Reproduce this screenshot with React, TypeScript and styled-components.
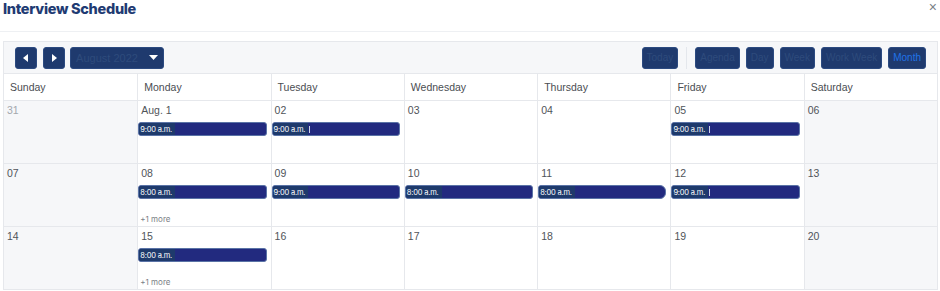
import React from 'react';
import styled, { createGlobalStyle } from 'styled-components';

const GlobalStyle = createGlobalStyle`
  body {
    margin: 0;
    background: #ffffff;
    font-family: "Liberation Sans", Arial, sans-serif;
  }
`;

type Event = { time: string; mark?: boolean; rounded?: boolean };
type Day = { label: string; muted?: boolean; weekend?: boolean; events?: Event[]; more?: number };

const weekdays = ['Sunday', 'Monday', 'Tuesday', 'Wednesday', 'Thursday', 'Friday', 'Saturday'];

const weeks: Day[][] = [
  [
    { label: '31', muted: true, weekend: true },
    { label: 'Aug. 1', events: [{ time: '9:00 a.m.' }] },
    { label: '02', events: [{ time: '9:00 a.m.', mark: true }] },
    { label: '03' },
    { label: '04' },
    { label: '05', events: [{ time: '9:00 a.m.', mark: true }] },
    { label: '06', weekend: true },
  ],
  [
    { label: '07', weekend: true },
    { label: '08', events: [{ time: '8:00 a.m.' }], more: 1 },
    { label: '09', events: [{ time: '9:00 a.m.' }] },
    { label: '10', events: [{ time: '8:00 a.m.' }] },
    { label: '11', events: [{ time: '8:00 a.m.', rounded: true }] },
    { label: '12', events: [{ time: '9:00 a.m.', mark: true }] },
    { label: '13', weekend: true },
  ],
  [
    { label: '14', weekend: true },
    { label: '15', events: [{ time: '8:00 a.m.' }], more: 1 },
    { label: '16' },
    { label: '17' },
    { label: '18' },
    { label: '19' },
    { label: '20', weekend: true },
  ],
];

const views = ['Agenda', 'Day', 'Week', 'Work Week', 'Month'];

const App: React.FC = () => {
  return (
    <Page>
      <GlobalStyle />
      <Header>
        <Title>Interview Schedule</Title>
        <Close>×</Close>
      </Header>

      <Calendar>
        <Toolbar>
          <Group>
            <NavButton aria-label="previous">
              <svg width="6" height="8" viewBox="0 0 6 8">
                <path d="M5 0 L0 4 L5 8 Z" fill="#ffffff" />
              </svg>
            </NavButton>
            <NavButton aria-label="next">
              <svg width="6" height="8" viewBox="0 0 6 8">
                <path d="M1 0 L6 4 L1 8 Z" fill="#ffffff" />
              </svg>
            </NavButton>
            <MonthPicker>
              August 2022
              <svg width="9" height="5" viewBox="0 0 9 5">
                <path d="M0 0 L9 0 L4.5 5 Z" fill="#ffffff" />
              </svg>
            </MonthPicker>
          </Group>
          <Group>
            <ToolButton>Today</ToolButton>
            <Divider />
            {views.map(v => (
              <ToolButton key={v} active={v === 'Month'}>{v}</ToolButton>
            ))}
          </Group>
        </Toolbar>

        <Grid>
          {weekdays.map(d => (
            <HeadCell key={d}>{d}</HeadCell>
          ))}
          {weeks.map((week, wi) =>
            week.map((day, di) => (
              <DayCell key={`${wi}-${di}`} weekend={day.weekend}>
                <DateLabel muted={day.muted}>{day.label}</DateLabel>
                {day.events?.map((ev, ei) => (
                  <EventBar key={ei} rounded={ev.rounded}>
                    <EventTime>{ev.time}</EventTime>
                    {ev.mark && <Tick />}
                  </EventBar>
                ))}
                {day.more && <More>+{day.more} more</More>}
              </DayCell>
            ))
          )}
        </Grid>
      </Calendar>
    </Page>
  );
};

const Page = styled.div`
  width: 940px;
  height: 291px;
  overflow: hidden;
  background: #ffffff;
`;

const Header = styled.div`
  height: 32px;
  display: flex;
  justify-content: space-between;
  align-items: flex-start;
  border-bottom: 1px solid #eef0f3;
  box-sizing: border-box;
`;

const Title = styled.h1`
  margin: 0;
  padding: 0 0 0 3px;
  font-family: "Inter", "Liberation Sans", sans-serif;
  font-size: 14.5px;
  line-height: 17px;
  font-weight: 800;
  color: #1f3b73;
  letter-spacing: -0.3px;
`;

const Close = styled.span`
  font-size: 14px;
  line-height: 14px;
  color: #7a7f87;
  padding-right: 3px;
`;

const Calendar = styled.div`
  margin: 9px 2px 0 3px;
  border: 1px solid #e6e8ec;
  border-bottom: none;
`;

const Toolbar = styled.div`
  height: 31px;
  padding: 0 11px;
  background: #f6f7f9;
  display: flex;
  justify-content: space-between;
  align-items: center;
  border-bottom: 1px solid #e6e8ec;
`;

const Group = styled.div`
  display: flex;
  align-items: center;
  gap: 6px;
`;

const BaseButton = styled.button`
  height: 22px;
  box-sizing: border-box;
  border: 1px solid #2c4a80;
  border-radius: 3px;
  background: #1f3a6e;
  font-family: "Liberation Sans", Arial, sans-serif;
  font-size: 10px;
  color: #2e4b7c;
  padding: 0 4px;
  display: flex;
  align-items: center;
  justify-content: center;
  cursor: pointer;
`;

const NavButton = styled(BaseButton)`
  width: 22px;
  padding: 0;
`;

const MonthPicker = styled(BaseButton)`
  width: 94px;
  gap: 11px;
  font-size: 11px;
  margin-left: -1px;
`;

const ToolButton = styled(BaseButton)<{ active?: boolean }>`
  color: ${p => (p.active ? '#1f73e6' : '#2e4b7c')};
`;

const Divider = styled.span`
  width: 1px;
  height: 22px;
  background: #e4e7ec;
  margin: 0 2px;
`;

const Grid = styled.div`
  display: grid;
  grid-template-columns: repeat(7, 1fr);
  grid-template-rows: 27px repeat(3, 63px);
`;

const HeadCell = styled.div`
  display: flex;
  align-items: center;
  padding-left: 6px;
  font-size: 10.5px;
  color: #4a4d52;
  border-left: 1px solid #e6e8ec;
  border-bottom: 1px solid #e6e8ec;
  &:first-child {
    border-left: none;
  }
`;

const DayCell = styled.div<{ weekend?: boolean }>`
  display: flex;
  flex-direction: column;
  align-items: stretch;
  padding: 2px 4px 0 0;
  background: ${p => (p.weekend ? '#f6f7f9' : '#ffffff')};
  border-left: 1px solid #e6e8ec;
  border-bottom: 1px solid #e6e8ec;
  min-width: 0;
  &:nth-child(7n + 1) {
    border-left: none;
  }
`;

const DateLabel = styled.div<{ muted?: boolean }>`
  height: 17px;
  line-height: 15px;
  padding-left: 3px;
  font-size: 10.5px;
  color: ${p => (p.muted ? '#a3a7ad' : '#505459')};
  margin-bottom: 2px;
`;

const EventBar = styled.div<{ rounded?: boolean }>`
  height: 14px;
  box-sizing: border-box;
  display: flex;
  align-items: center;
  background: #222a7f;
  border: 1px solid #5a73a6;
  border-radius: ${p => (p.rounded ? '3px 6px 6px 3px' : '3px')};
  overflow: hidden;
`;

const EventTime = styled.span`
  height: 100%;
  display: flex;
  align-items: center;
  padding: 0 3px 0 1px;
  background: #1e3a6c;
  font-family: "Inter", "Liberation Sans", sans-serif;
  font-size: 7.5px;
  letter-spacing: -0.2px;
  color: #ffffff;
`;

const Tick = styled.span`
  width: 1px;
  height: 7px;
  background: #c9d1e6;
  margin-left: 1px;
`;

const More = styled.div`
  margin-top: 15px;
  padding-left: 2px;
  font-family: "Inter", "Liberation Sans", sans-serif;
  font-size: 8px;
  color: #7b7f86;
`;

export default App;
